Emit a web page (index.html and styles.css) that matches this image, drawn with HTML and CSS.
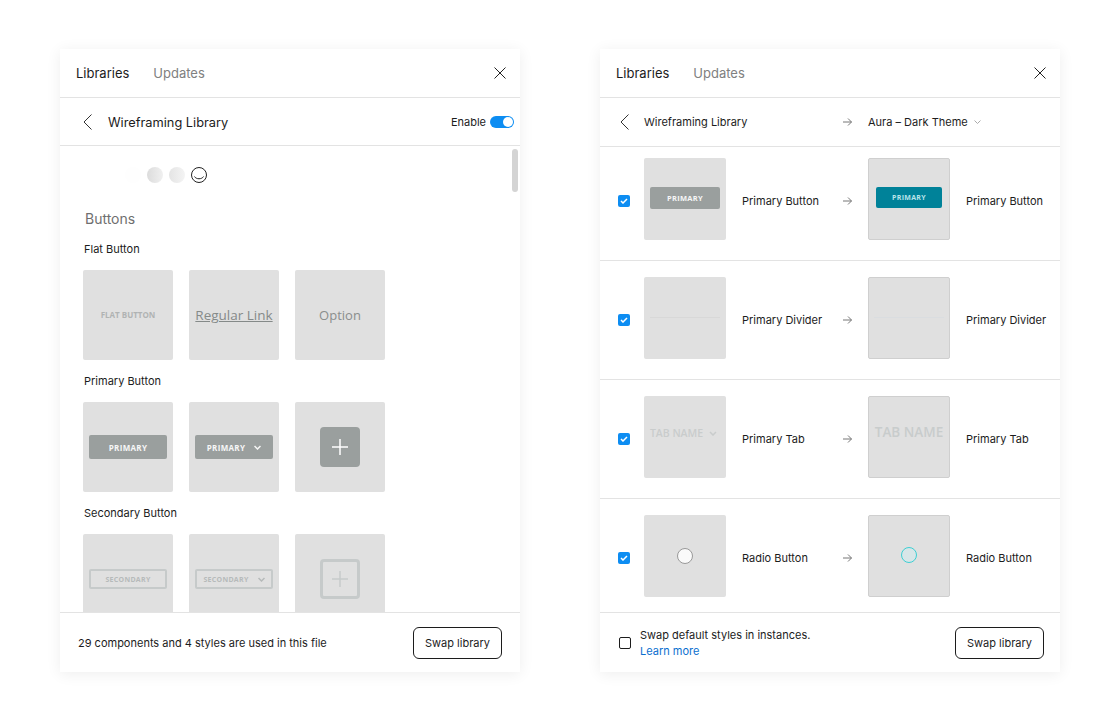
FILE: index.html
```html
<!DOCTYPE html>
<html lang="en">
<head>
    <meta charset="UTF-8">
    <title>Swap library</title>
    <link rel="stylesheet" href="styles.css">
</head>
<body>
    <div class="panel">
        <div class="tabs">
            <span class="tab active">Libraries</span>
            <span class="tab">Updates</span>
            <svg class="close" width="12" height="12" viewBox="0 0 12 12"><path d="M.5.5l11 11M11.500.5l-11 11"/></svg>
        </div>
        <div class="subhead">
            <svg class="back" width="9" height="16" viewBox="0 0 9 16"><path d="M8.500.5L1 8l7.500 7.500"/></svg>
            <span class="lib-title">Wireframing Library</span>
            <span class="enable">Enable</span>
            <span class="toggle"></span>
        </div>
        <div class="content">
            <div class="scrollbar"></div>
            <div class="dots">
                <span class="dot faint"></span>
                <span class="dot"></span>
                <span class="dot light"></span>
                <svg width="16" height="16" viewBox="0 0 16 16"><circle cx="8" cy="8" r="7.500"/><path d="M3.500 9.500c1.500 3 7.500 3 9 0"/></svg>
            </div>
            <h2 class="section">Buttons</h2>

            <h3 class="group">Flat Button</h3>
            <div class="thumbs">
                <div class="thumb big"><span class="flat-text">FLAT BUTTON</span></div>
                <div class="thumb big"><span class="link-text">Regular Link</span></div>
                <div class="thumb big"><span class="option-text">Option</span></div>
            </div>

            <h3 class="group">Primary Button</h3>
            <div class="thumbs">
                <div class="thumb big"><span class="btn">PRIMARY</span></div>
                <div class="thumb big">
                    <span class="btn">PRIMARY
                        <svg width="7" height="5" viewBox="0 0 7 5"><path d="M.5 1l3 3 3-3"/></svg>
                    </span>
                </div>
                <div class="thumb big">
                    <span class="add">
                        <svg width="18" height="18" viewBox="0 0 18 18"><path d="M9 1v16M1 9h16"/></svg>
                    </span>
                </div>
            </div>

            <h3 class="group">Secondary Button</h3>
            <div class="thumbs">
                <div class="thumb big"><span class="btn secondary">SECONDARY</span></div>
                <div class="thumb big">
                    <span class="btn secondary">SECONDARY
                        <svg width="7" height="5" viewBox="0 0 7 5"><path d="M.5 1l3 3 3-3"/></svg>
                    </span>
                </div>
                <div class="thumb big">
                    <span class="add secondary">
                        <svg width="18" height="18" viewBox="0 0 18 18"><path d="M9 1v16M1 9h16"/></svg>
                    </span>
                </div>
            </div>
        </div>
        <div class="footer">
            <span class="footer-text">29 components and 4 styles are used in this file</span>
            <button class="swap">Swap library</button>
        </div>
    </div>

    <div class="panel">
        <div class="tabs">
            <span class="tab active">Libraries</span>
            <span class="tab">Updates</span>
            <svg class="close" width="12" height="12" viewBox="0 0 12 12"><path d="M.5.5l11 11M11.500.5l-11 11"/></svg>
        </div>
        <div class="subhead swap-head">
            <svg class="back" width="9" height="16" viewBox="0 0 9 16"><path d="M8.500.5L1 8l7.500 7.500"/></svg>
            <span>Wireframing Library</span>
            <svg class="arrow" width="9" height="8" viewBox="0 0 9 8"><path d="M0 4h8.500M5 .5L8.500 4 5 7.500"/></svg>
            <span class="target">Aura – Dark Theme
                <svg width="7" height="4" viewBox="0 0 7 4"><path d="M.5.500l3 3 3-3"/></svg>
            </span>
        </div>
        <div class="rows">
            <div class="row first">
                <span class="check"><svg width="8" height="6" viewBox="0 0 8 6"><path d="M1 3l2 2 4-4"/></svg></span>
                <div class="thumb"><span class="btn small">PRIMARY</span></div>
                <span>Primary Button</span>
                <svg class="arrow" width="9" height="8" viewBox="0 0 9 8"><path d="M0 4h8.500M5 .5L8.500 4 5 7.500"/></svg>
                <div class="thumb outlined"><span class="btn small aura">PRIMARY</span></div>
                <span>Primary Button</span>
            </div>
            <div class="row">
                <span class="check"><svg width="8" height="6" viewBox="0 0 8 6"><path d="M1 3l2 2 4-4"/></svg></span>
                <div class="thumb"><span class="divider"></span></div>
                <span>Primary Divider</span>
                <svg class="arrow" width="9" height="8" viewBox="0 0 9 8"><path d="M0 4h8.500M5 .5L8.500 4 5 7.500"/></svg>
                <div class="thumb outlined"><span class="divider aura"></span></div>
                <span>Primary Divider</span>
            </div>
            <div class="row">
                <span class="check"><svg width="8" height="6" viewBox="0 0 8 6"><path d="M1 3l2 2 4-4"/></svg></span>
                <div class="thumb"><span class="tab-name">TAB NAME
                    <svg width="8" height="5" viewBox="0 0 8 5"><path d="M1 1l3 3 3-3"/></svg>
                </span></div>
                <span>Primary Tab</span>
                <svg class="arrow" width="9" height="8" viewBox="0 0 9 8"><path d="M0 4h8.500M5 .5L8.500 4 5 7.500"/></svg>
                <div class="thumb outlined"><span class="tab-name aura">TAB NAME</span></div>
                <span>Primary Tab</span>
            </div>
            <div class="row last">
                <span class="check"><svg width="8" height="6" viewBox="0 0 8 6"><path d="M1 3l2 2 4-4"/></svg></span>
                <div class="thumb"><span class="radio"></span></div>
                <span>Radio Button</span>
                <svg class="arrow" width="9" height="8" viewBox="0 0 9 8"><path d="M0 4h8.500M5 .5L8.500 4 5 7.500"/></svg>
                <div class="thumb outlined"><span class="radio aura"></span></div>
                <span>Radio Button</span>
            </div>
        </div>
        <div class="footer swap-foot">
            <span class="box"></span>
            <div class="footer-text">
                <div>Swap default styles in instances.</div>
                <a class="learn" href="#">Learn more</a>
            </div>
            <button class="swap">Swap library</button>
        </div>
    </div>
</body>
</html>
```

FILE: styles.css
```css
* {
    box-sizing: border-box;
}
body {
    display: flex;
    gap: 80px;
    margin: 0;
    padding: 49px 60px;
    font-family: Inter, "Liberation Sans", sans-serif;
    font-size: 11px;
    color: #1c1c1c;
    background-color: white;
}
svg {
    display: block;
    fill: none;
    stroke: currentColor;
}
.panel {
    display: flex;
    flex-direction: column;
    width: 460px;
    height: 623px;
    background-color: white;
    box-shadow: 0 2px 14px rgba(0, 0, 0, .07);
}

/* top bars */
.tabs {
    display: flex;
    align-items: center;
    gap: 24px;
    height: 49px;
    padding: 0 14px 0 16px;
    border-bottom: 1px solid #e3e3e3;
    flex-shrink: 0;
}
.tab {
    font-size: 13px;
    color: #808080;
}
.tab.active {
    color: #1c1c1c;
}
.close {
    margin-left: auto;
    color: #222;
}
.subhead {
    display: flex;
    align-items: center;
    height: 48px;
    padding: 0 6px 0 23px;
    border-bottom: 1px solid #e3e3e3;
    flex-shrink: 0;
}
.back {
    color: #333;
}
.lib-title {
    margin-top: 1px;
    margin-left: 16px;
    font-size: 12.800px;
}
.enable {
    margin-left: auto;
    margin-right: 4px;
}
.toggle {
    position: relative;
    width: 24px;
    height: 12px;
    border-radius: 6px;
    background-color: #0d8df2;
}
.toggle:before {
    content: "";
    position: absolute;
    top: 1px;
    right: 1px;
    width: 10px;
    height: 10px;
    border-radius: 50%;
    background-color: white;
}

/* left panel */
.content {
    position: relative;
    flex: 1;
    min-height: 0;
    overflow: hidden;
    padding: 21px 0 0 23px;
}
.scrollbar {
    position: absolute;
    top: 3px;
    right: 2px;
    width: 6px;
    height: 43px;
    border-radius: 3px;
    background-color: #d4d4d4;
}
.dots {
    display: flex;
    gap: 6px;
    margin-left: 42px;
    color: #222;
}
.dot {
    width: 16px;
    height: 16px;
    border-radius: 50%;
    background: linear-gradient(90deg, #dcdcdc, #f0f0f0);
}
.dot.light {
    background: linear-gradient(90deg, #e4e4e4, #f4f4f4);
}
.dot.faint {
    background: #fefefe;
}
.section {
    margin: 27px 0 0 2px;
    font-size: 14px;
    font-weight: 400;
    line-height: 17px;
    color: #6f6f6f;
}
.group {
    margin: 15px 0 14px 1px;
    font-size: 11px;
    font-weight: 400;
    line-height: 14px;
}
.thumbs {
    display: flex;
    gap: 16px;
}
.thumbs + .group {
    margin-top: 14px;
}
.thumb {
    display: flex;
    align-items: center;
    justify-content: center;
    gap: 6px;
    width: 82px;
    height: 82px;
    border-radius: 2px;
    background-color: #e0e0e0;
    font-family: "Open Sans", sans-serif;
    flex-shrink: 0;
}
.thumb.big {
    width: 90px;
    height: 90px;
}
.thumb.outlined {
    border: 1px solid #cfcfcf;
}

/* things inside the thumbnails */
.flat-text {
    margin-bottom: 2px;
    font-size: 8px;
    font-weight: 700;
    color: #b0b3b3;
}
.link-text {
    font-size: 13.500px;
    color: #858a89;
    text-decoration: underline;
}
.option-text {
    font-size: 13px;
    color: #8a8e8d;
}
.btn {
    display: flex;
    align-items: center;
    justify-content: center;
    gap: 9px;
    width: 78px;
    height: 24px;
    border-radius: 2px;
    background-color: #9a9f9e;
    font-size: 8px;
    font-weight: 700;
    letter-spacing: .3px;
    color: #f6f6f6;
}
.btn svg {
    stroke-width: 1.500;
}
.btn.secondary {
    height: 20px;
    border: 2px solid #c6caca;
    background-color: transparent;
    color: #b6baba;
    font-size: 7px;
}
.btn.small {
    width: 70px;
    height: 22px;
    margin-bottom: 2px;
    font-size: 7.500px;
}
.btn.aura {
    width: 66px;
    height: 21px;
    margin-bottom: 4px;
    background-color: #008299;
    color: #b9e4ea;
    font-size: 7px;
}
.add {
    display: flex;
    align-items: center;
    justify-content: center;
    width: 40px;
    height: 40px;
    border-radius: 4px;
    background-color: #9a9f9e;
    color: white;
}
.add svg {
    stroke-width: 1.500;
}
.add.secondary {
    border: 3px solid #c6caca;
    background-color: transparent;
    color: #c6caca;
}
.divider {
    width: 70px;
    height: 1px;
    margin-bottom: 1px;
    background-color: #d8d8d8;
}
.divider.aura {
    background-color: #dadde0;
}
.tab-name {
    display: flex;
    align-items: center;
    gap: 6px;
    margin-right: 3px;
    margin-bottom: 8px;
    font-size: 10.500px;
    font-weight: 600;
    color: #c9cccc;
}
.tab-name svg {
    stroke-width: 1.500;
}
.tab-name.aura {
    margin-right: 0;
    margin-bottom: 10px;
    font-size: 13.500px;
    color: #c8cccc;
}
.radio {
    width: 16px;
    height: 16px;
    border: 1px solid #999;
    border-radius: 50%;
    background-color: #fafafa;
}
.radio.aura {
    border-color: #3dcfd3;
    background-color: #d8e6e8;
    margin-bottom: 3px;
}

/* right panel */
.swap-head {
    display: grid;
    grid-template-columns: 24px 199px 25px auto;
    height: 49px;
    padding-left: 20px;
}
.arrow {
    color: #777;
}
.target {
    display: flex;
    align-items: center;
    gap: 6px;
}
.target svg {
    color: #aaa;
}
.rows {
    flex: 1;
    min-height: 0;
    overflow: hidden;
}
.row {
    display: grid;
    grid-template-columns: 26px 98px 101px 25px 98px 1fr;
    align-items: center;
    height: 119px;
    padding: 16px 0 20px 18px;
    border-bottom: 1px solid #e3e3e3;
}
.row > span,
.row > .arrow {
    margin-top: 4px;
}
.row.first {
    height: 114px;
    padding-top: 11px;
}
.row.last {
    height: 113px;
    padding-bottom: 15px;
    border-bottom: 0;
}
.check {
    display: flex;
    align-items: center;
    justify-content: center;
    width: 12px;
    height: 12px;
    border-radius: 2px;
    background-color: #0d8df2;
    color: white;
}
.check svg {
    stroke-width: 1.500;
}

/* footers */
.footer {
    display: flex;
    align-items: center;
    height: 60px;
    padding: 0 18px;
    border-top: 1px solid #e3e3e3;
    flex-shrink: 0;
}
.swap {
    width: 89px;
    height: 32px;
    margin-left: auto;
    padding: 0;
    font-family: inherit;
    font-size: 11px;
    color: #1c1c1c;
    border: 1px solid #1c1c1c;
    border-radius: 6px;
    background-color: white;
}
.swap-foot {
    gap: 9px;
    padding-left: 19px;
    padding-right: 16px;
}
.swap-foot .footer-text {
    line-height: 16px;
}
.box {
    width: 12px;
    height: 12px;
    border: 1.500px solid #1c1c1c;
    border-radius: 2px;
}
.learn {
    color: #0b6fcf;
    text-decoration: none;
}
```
